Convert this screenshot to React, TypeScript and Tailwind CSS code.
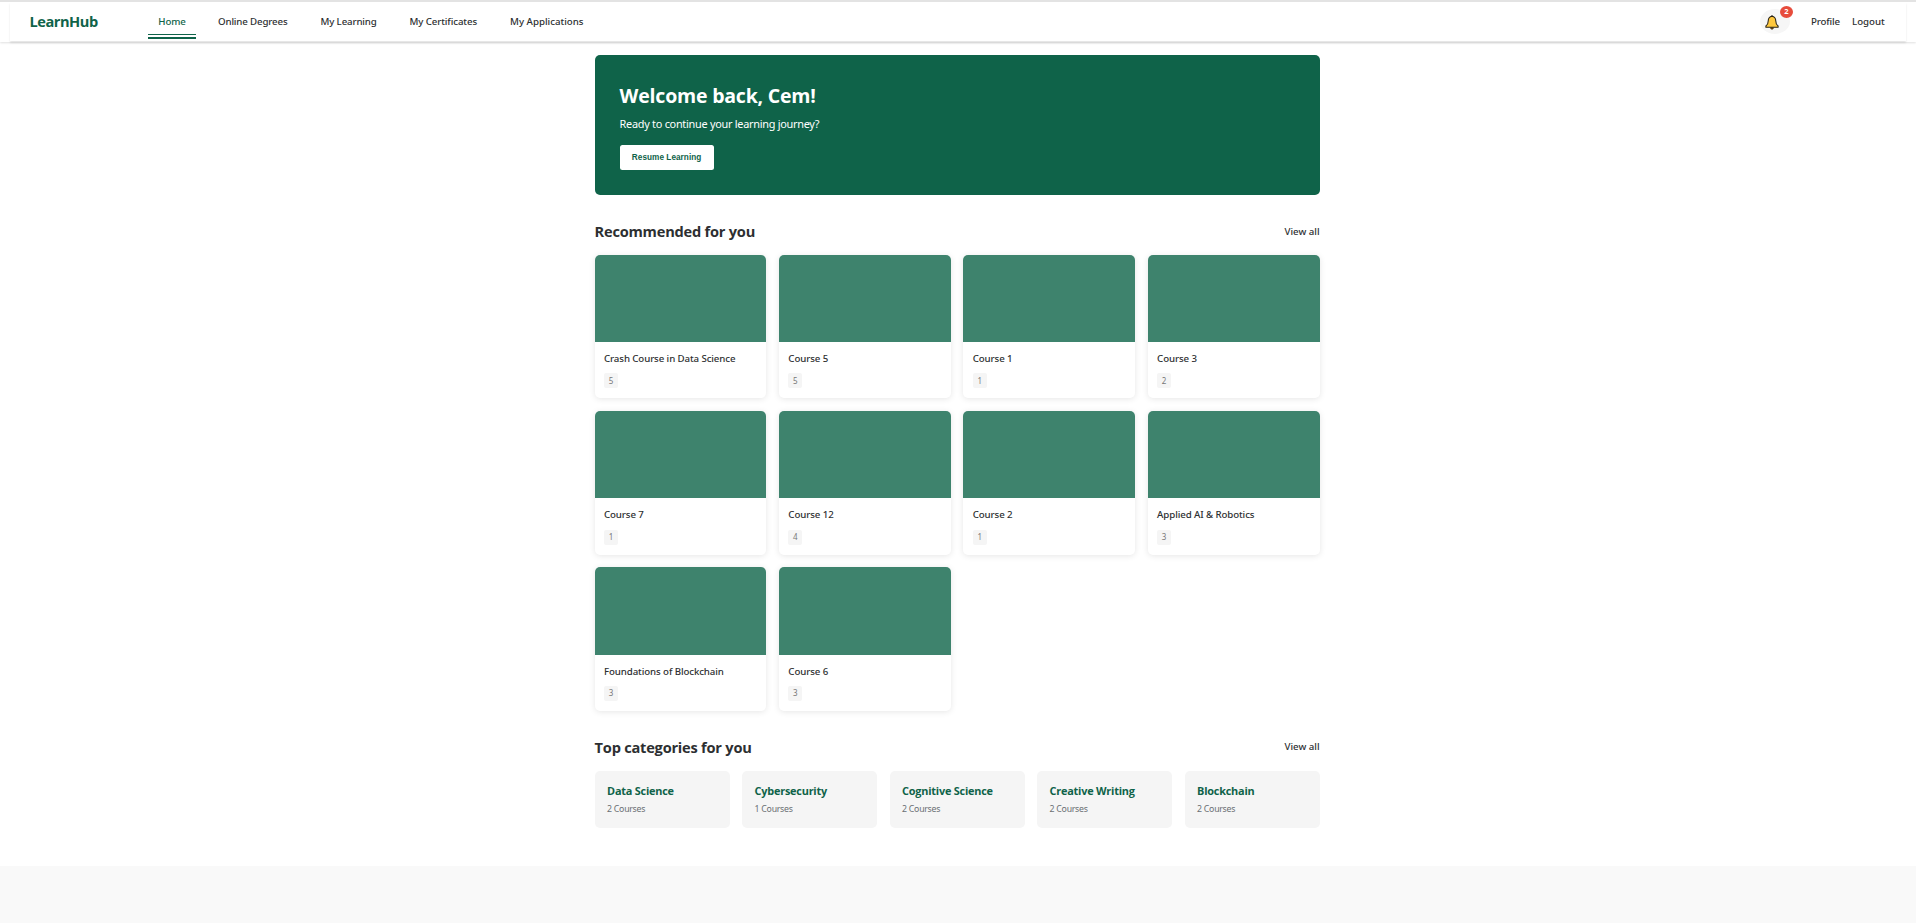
const navLinks = [
  { label: "Online Degrees", style: "ml-[22px] w-[70.5px] tracking-[-0.14px]" },
  { label: "My Learning", style: "ml-[32px] w-[57px] tracking-[-0.14px]" },
  { label: "My Certificates", style: "ml-[32px] w-[68px] tracking-[-0.1px]" },
  { label: "My Applications", style: "ml-[32.5px] w-[75px] tracking-[0.01px]" },
];

const courses = [
  { title: "Crash Course in Data Science", count: 5 },
  { title: "Course 5", count: 5 },
  { title: "Course 1", count: 1 },
  { title: "Course 3", count: 2 },
  { title: "Course 7", count: 1 },
  { title: "Course 12", count: 4 },
  { title: "Course 2", count: 1 },
  { title: "Applied AI & Robotics", count: 3 },
  { title: "Foundations of Blockchain", count: 3 },
  { title: "Course 6", count: 3 },
];

const categories = [
  { name: "Data Science", count: 2 },
  { name: "Cybersecurity", count: 1 },
  { name: "Cognitive Science", count: 2 },
  { name: "Creative Writing", count: 2 },
  { name: "Blockchain", count: 2 },
];

function Bell() {
  return (
    <svg width="14" height="15" viewBox="0 0 13 14" className="-ml-[6px] mt-[2px]">
      <path
        d="M6.5 1.1C4.3 1.5 3 3.2 3 5.4c0 2.4-.5 3.7-2.2 4.9v1.2h11.4v-1.2C10.5 9.1 10 7.8 10 5.4 10 3.2 8.700 1.5 6.5 1.1Z"
        fill="#ffc83d"
        stroke="#2b2415"
        strokeWidth="1"
        strokeLinejoin="round"
      />
      <path d="M5.2 11.9h2.6a1.3 1.3 0 0 1-2.6 0Z" fill="#d67d00" stroke="#2b2415" strokeWidth=".8" />
      <path d="M6.5.3v1" stroke="#2b2415" strokeWidth="1.2" />
    </svg>
  );
}

function SectionHeader({ title, linkStyle }: { title: string; linkStyle: string }) {
  return (
    <div className="flex h-5 items-center justify-between">
      <h2 className="text-[14.6px] leading-5 font-bold tracking-[-0.22px] text-[#2d2f31]">{title}</h2>
      <a className={`font-['Noto_Sans',sans-serif] text-[9.7px] leading-5 font-medium ${linkStyle}`}>View all</a>
    </div>
  );
}

export default function App() {
  return (
    <div className="min-h-[923px] bg-[#f9f9f9] font-['Open_Sans','Noto_Sans',sans-serif] text-[#2d2f31]">
      <div className="h-[866px] bg-white">
        <header className="h-[42px] border-t-2 border-[#e3e3e3] bg-white px-[10px] shadow-[0_1px_2px_rgba(0,0,0,0.12)]">
          <nav className="flex h-[39px] items-center bg-white pr-[21px] pl-[19.5px] font-['Noto_Sans',sans-serif] shadow-[0_1.5px_2px_rgba(0,0,0,0.1)]">
            <span className="w-[118.5px] pb-[2px] font-['Open_Sans',sans-serif] text-[14.6px] leading-5 font-bold tracking-[-0.46px] text-[#0f6349]">
              LearnHub
            </span>
            <div className="flex h-full w-12 flex-col items-center pt-[10px] text-[#0f6349]">
              <span className="h-[22px] text-[9.7px] leading-5 font-medium tracking-[-0.1px]">Home</span>
              <span className="h-px w-full bg-[#0f6349]" />
              <span className="mt-[2px] h-[2px] w-full bg-[#0f6349]" />
            </div>
            {navLinks.map((link) => (
              <a key={link.label} className={`text-[9.7px] leading-5 font-medium whitespace-nowrap ${link.style}`}>
                {link.label}
              </a>
            ))}
            <div className="ml-auto flex items-center">
              <button className="relative flex h-[25px] w-[30px] items-center justify-center rounded-[50%] bg-[#f6f6f6]">
                <Bell />
                <span className="absolute -top-[3px] left-5 flex h-3 w-[13px] items-center justify-center rounded-[50%] bg-[#e74c3c] text-[7.5px] leading-none font-bold text-white">
                  2
                </span>
              </button>
              <a className="ml-[21px] w-[41px] text-[9.7px] leading-5 font-medium tracking-[-0.15px]">Profile</a>
              <a className="w-[33px] text-[9.7px] leading-5 font-medium">Logout</a>
            </div>
          </nav>
        </header>

        <main className="ml-[594.6px] w-[725px] pt-[13px]">
          <section className="h-[140px] rounded-[5px] bg-[#0f6349] p-[25px] text-white">
            <h1 className="mt-[3px] text-[19.5px] leading-[26px] font-bold tracking-[-0.2px]">Welcome back, Cem!</h1>
            <p className="mt-[7px] font-['Noto_Sans',sans-serif] text-[10.9px] leading-4 tracking-[-0.27px]">
              Ready to continue your learning journey?
            </p>
            <button className="mt-[13px] flex h-[25px] w-[94px] items-center justify-center rounded-[2.5px] bg-white pt-px font-['Liberation_Sans',sans-serif] text-[8.2px] font-bold tracking-[0.05px] text-[#0f6349]">
              Resume Learning
            </button>
          </section>

          <section className="pt-[26px]">
            <SectionHeader title="Recommended for you" linkStyle="pt-[2px]" />
            <div className="mt-[13.6px] grid grid-cols-4 gap-[12.5px]">
              {courses.map((course) => (
                <article
                  key={course.title}
                  className="h-[143.75px] overflow-hidden rounded-[5px] bg-white shadow-[0_1px_6px_rgba(0,0,0,0.1)]"
                >
                  <div className="h-[87.5px] bg-[#3e836d]" />
                  <div className="px-[9.4px] pt-[9px]">
                    <h3 className="font-['Noto_Sans',sans-serif] text-[9.7px] leading-4 font-medium tracking-[-0.1px]">{course.title}</h3>
                    <span className="mt-[6.4px] flex h-[15px] w-[14px] items-center justify-center rounded-[2px] bg-[#f5f5f5] font-['Noto_Sans',sans-serif] text-[8px] text-[#777]">
                      {course.count}
                    </span>
                  </div>
                </article>
              ))}
            </div>
          </section>

          <section className="pt-[26px]">
            <SectionHeader title="Top categories for you" linkStyle="pt-0" />
            <div className="mt-[14.1px] grid grid-cols-5 gap-[12.5px]">
              {categories.map((category) => (
                <article key={category.name} className="h-[57px] rounded-[5px] bg-[#f5f5f5] px-[12.5px] pt-3">
                  <h3 className="text-[10.9px] leading-4 font-bold tracking-[-0.22px] text-[#0f6349]">{category.name}</h3>
                  <p className="mt-[4.5px] font-['Noto_Sans',sans-serif] text-[8.75px] leading-3 tracking-[-0.27px] text-[#6a6f73]">
                    {category.count} Courses
                  </p>
                </article>
              ))}
            </div>
          </section>
        </main>
      </div>
    </div>
  );
}
